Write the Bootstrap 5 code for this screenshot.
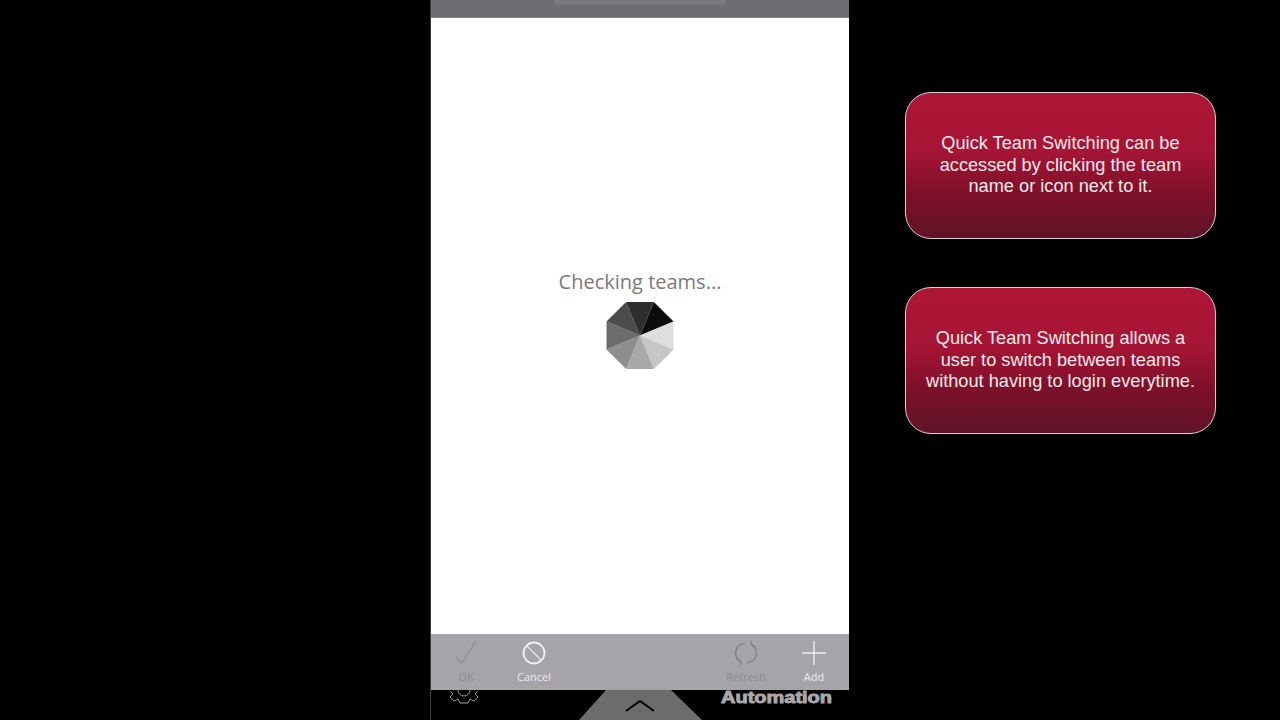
<!DOCTYPE html>
<html lang="en">
<head>
    <meta charset="UTF-8">
    <meta name="viewport" content="width=device-width, initial-scale=1.0">
    <link rel="stylesheet" href="https://cdn.jsdelivr.net/npm/bootstrap@5.3.0/dist/css/bootstrap.min.css">
    <style>
        body { background: #000; height: 720px; overflow: hidden; font-family: "Liberation Sans", Arial, sans-serif; }
        .phone { width: 419px; height: 720px; margin-left: 430px; border-left: 1px solid #3c3c3c; }
        .phone-top { height: 18px; background: #6e6d71; border-bottom: 1px solid #807f83; }
        .phone-top-blur { width: 172px; height: 4px; background: #807f83; filter: blur(1.5px); }
        .phone-body { background: #fff; padding-top: 250px; }
        .checking { font-family: "Open Sans", sans-serif; font-size: 20px; line-height: 27px; color: #7b7a7e; }
        .spinner-shape { margin-top: 7px; }
        .phone-bar { height: 56px; background: #a5a4a9; padding: 6px 1px 0 1px; }
        .bar-item { width: 68px; font-family: "Open Sans", sans-serif; font-size: 11px; line-height: 14px; color: #ecebee; }
        .bar-item svg { display: block; margin: 0 auto 4px; }
        .bar-item.is-off { color: #8c8b90; }
        .phone-under { height: 30px; }
        .under-text { font-family: "Liberation Sans", Arial, sans-serif; font-size: 16px; font-weight: 700; fill: #a9a9a9; stroke: #a9a9a9; stroke-width: .9px; }
        .side { margin-left: 56px; padding-top: 92px; gap: 48px; }
        .callout { width: 311px; height: 147px; border: 1px solid #d9cdd0; border-radius: 26px;
            background: linear-gradient(180deg, #ad1537 0%, #a61535 40%, #7f1029 68%, #5f1327 100%);
            color: #f6eaed; font-size: 18.2px; line-height: 21.4px; }
    </style>
    <title>Quick Team Switching</title>
</head>
<body>
    <div class="d-flex">
        <div class="phone d-flex flex-column">
            <div class="phone-top d-flex justify-content-center">
                <span class="phone-top-blur"></span>
            </div>

            <div class="phone-body flex-fill d-flex flex-column align-items-center">
                <div class="checking">Checking teams...</div>
                <svg class="spinner-shape" width="68" height="68" viewBox="-34 -33.5 68 68">
                    <polygon points="0,0 13.9,-33.5 33.5,-13.9" fill="#0c0c0c"/>
                    <polygon points="0,0 33.5,-13.9 33.5,13.9" fill="#dedede"/>
                    <polygon points="0,0 33.5,13.9 13.9,33.5" fill="#c6c6c6"/>
                    <polygon points="0,0 13.9,33.5 -13.9,33.5" fill="#a9a9a9"/>
                    <polygon points="0,0 -13.9,33.5 -33.5,13.9" fill="#8e8e8e"/>
                    <polygon points="0,0 -33.5,13.9 -33.5,-13.9" fill="#6c6c6c"/>
                    <polygon points="0,0 -33.5,-13.9 -13.9,-33.5" fill="#4c4c4c"/>
                    <polygon points="0,0 -13.9,-33.5 13.9,-33.5" fill="#2e2e2e"/>
                </svg>
            </div>

            <div class="phone-bar d-flex">
                <div class="bar-item is-off text-center">
                    <svg width="26" height="26" viewBox="0 0 26 26" fill="none" stroke="#8c8b90" stroke-width="1.2">
                        <path d="M3 17 L9 23 L23 1"/>
                    </svg>
                    OK
                </div>
                <div class="bar-item text-center me-auto">
                    <svg width="26" height="26" viewBox="0 0 26 26" fill="none" stroke="#f0eff2" stroke-width="1.8">
                        <circle cx="13" cy="13" r="10.5"/>
                        <path d="M5.6 5.6 L20.4 20.4" stroke-width="1.2"/>
                    </svg>
                    Cancel
                </div>
                <div class="bar-item is-off text-center">
                    <svg width="26" height="26" viewBox="0 0 26 26" fill="none" stroke="#848388" stroke-width="1.6">
                        <path d="M12 3.5 A9.5 9.5 0 0 0 7 21"/>
                        <path d="M3.5 19 L7.5 21 L8 25"/>
                        <path d="M14 22.5 A9.5 9.5 0 0 0 19 5"/>
                        <path d="M22.5 7 L18.5 5 L18 1"/>
                    </svg>
                    Refresh
                </div>
                <div class="bar-item text-center">
                    <svg width="26" height="26" viewBox="0 0 26 26" fill="none" stroke="#f0eff2" stroke-width="1.4">
                        <path d="M1 13 H25 M13 1 V25"/>
                    </svg>
                    Add
                </div>
            </div>

            <svg class="phone-under" width="418" height="30" viewBox="0 0 418 30" fill="none">
                <path d="M19 1 L22 4 L19 7 L23 11 L27 9 L29 13 L37 13 L39 9 L43 11 L47 7 L44 4 L47 1" stroke="#9a9a9a"/>
                <path d="M27 0 A6 6 0 0 0 39 0" stroke="#9a9a9a"/>
                <polygon points="175,0 240,0 271,30 148,30" fill="#6c6c6c"/>
                <path d="M195 21 L209 11 L223 21" stroke="#000" stroke-width="2"/>
                <text class="under-text" x="290" y="13" textLength="111" lengthAdjust="spacingAndGlyphs">Automation</text>
            </svg>
        </div>

        <div class="side d-flex flex-column">
            <div class="callout d-flex align-items-center justify-content-center text-center">
                <div>Quick Team Switching can be<br>accessed by clicking the team<br>name or icon next to it.</div>
            </div>
            <div class="callout d-flex align-items-center justify-content-center text-center">
                <div>Quick Team Switching allows a<br>user to switch between teams<br>without having to login everytime.</div>
            </div>
        </div>
    </div>

    <script src="https://cdn.jsdelivr.net/npm/bootstrap@5.3.0/dist/js/bootstrap.bundle.min.js"></script>
</body>
</html>
